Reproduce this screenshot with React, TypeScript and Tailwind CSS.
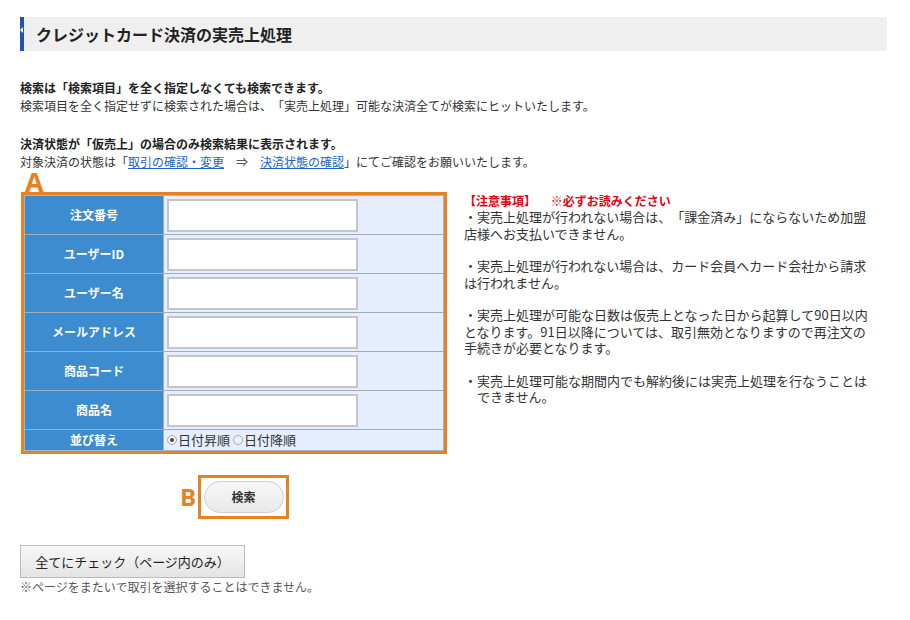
import React from 'react';

const fields = ['注文番号', 'ユーザーID', 'ユーザー名', 'メールアドレス', '商品コード', '商品名'];

const notes = [
  '・実売上処理が行われない場合は、「課金済み」にならないため加盟店様へお支払いできません。',
  '・実売上処理が行われない場合は、カード会員へカード会社から請求は行われません。',
  '・実売上処理が可能な日数は仮売上となった日から起算して90日以内となります。91日以降については、取引無効となりますので再注文の手続きが必要となります。',
];

const App: React.FC = () => {
  return (
    <div
      className="w-[910px] h-[620px] bg-white text-[#333] px-5 pt-[17px] [text-spacing-trim:space-all]"
      style={{ fontFamily: '"Noto Sans CJK JP", "Liberation Sans", sans-serif' }}
    >
      {/* Page title */}
      <div className="relative w-[867px] h-[34px] bg-[#efefef] border-l-4 border-[#1f55b0] flex items-center pl-3">
        <span className="absolute -left-1 top-[10px] w-0 h-0 border-y-[3px] border-y-transparent border-r-[3px] border-r-white" />
        <h1 className="text-[16px] font-bold text-[#222]">クレジットカード決済の実売上処理</h1>
      </div>

      {/* Intro */}
      <div className="mt-[28px] text-[12px] leading-[18px]">
        <p className="font-bold text-[#222]">検索は「検索項目」を全く指定しなくても検索できます。</p>
        <p>検索項目を全く指定せずに検索された場合は、「実売上処理」可能な決済全てが検索にヒットいたします。</p>
        <p className="font-bold text-[#222] mt-[20px]">決済状態が「仮売上」の場合のみ検索結果に表示されます。</p>
        <p>
          対象決済の状態は「<a className="text-[#1a63c9] underline">取引の確認・変更</a>
          {'　⇒　'}
          <a className="text-[#1a63c9] underline">決済状態の確認</a>」にてご確認をお願いいたします。
        </p>
      </div>

      <div className="flex items-start">
        {/* Search form */}
        <div className="w-[426px] ml-px">
          <div className="h-[21px] pl-1 flex items-end">
            <span className="text-[27px] leading-[20px] font-bold text-[#e8821e]" style={{ fontFamily: '"Open Sans", "Liberation Sans", sans-serif' }}>A</span>
          </div>
          <div className="border-[3px] border-[#e8821e]">
            <div className="border border-[#9fb6c8]">
              {fields.map((f) => (
                <div key={f} className="flex h-[39px] border-b border-[#9aaebd]">
                  <div className="w-[139px] bg-[#3d8ccf] text-white text-[12px] font-bold flex items-center justify-center border-r border-[#9aaebd]">
                    {f}
                  </div>
                  <div className="flex-1 bg-[#e6eefd] flex items-center pl-[3px]">
                    <input className="w-[191px] h-[33px] bg-white border-2 border-[#c3c6c9] outline-none" />
                  </div>
                </div>
              ))}
              <div className="flex h-[20px]">
                <div className="w-[139px] bg-[#3d8ccf] text-white text-[12px] font-bold flex items-center justify-center border-r border-[#9aaebd]">
                  並び替え
                </div>
                <div className="flex-1 bg-[#e6eefd] flex items-center pl-[3px] text-[13px] text-[#333]">
                  <span className="w-[10px] h-[10px] rounded-full border border-[#aaa] bg-[#f0f0f0] flex items-center justify-center mr-px">
                    <span className="w-[4px] h-[4px] rounded-full bg-[#444]" />
                  </span>
                  日付昇順
                  <span className="w-[10px] h-[10px] rounded-full border border-[#aaa] bg-[#f0f0f0] ml-[3px] mr-px" />
                  日付降順
                </div>
              </div>
            </div>
          </div>

          <div className="flex items-center mt-[21px] ml-[159px]">
            <span className="text-[24px] leading-none font-bold text-[#e8821e] mr-[2px]" style={{ fontFamily: '"Open Sans", "Liberation Sans", sans-serif' }}>B</span>
            <div className="border-[3px] border-[#e8821e] w-[91px] h-[44px] flex items-center justify-center">
              <button className="w-[80px] h-[32px] rounded-full border border-[#d0d0d0] bg-gradient-to-b from-[#f7f7f7] to-[#e9e9e9] text-[12px] font-bold text-[#333]">
                検索
              </button>
            </div>
          </div>
        </div>

        {/* Notes */}
        <div className="ml-[17px] mt-[22px] w-[410px] text-[13px] leading-[16.5px] text-[#333]">
          <p className="text-[#e60012] font-bold text-[12px] leading-[16px]">【注意事項】　 ※必ずお読みください</p>
          {notes.map((n, i) => (
            <p key={i} className="mb-[16px]">{n}</p>
          ))}
          <p className="pl-[13px] -indent-[13px]">・実売上処理可能な期間内でも解約後には実売上処理を行なうことはできません。</p>
        </div>
      </div>

      {/* Bulk check */}
      <div className="mt-[26px]">
        <button className="w-[225px] h-[33px] border border-[#bbb] bg-gradient-to-b from-[#f8f8f8] to-[#e4e4e4] text-[13px] text-[#222]">
          全てにチェック（ページ内のみ）
        </button>
        <p className="text-[12px] text-[#555] leading-[16px] mt-[1px]">※ページをまたいで取引を選択することはできません。</p>
      </div>
    </div>
  );
};

export default App;
